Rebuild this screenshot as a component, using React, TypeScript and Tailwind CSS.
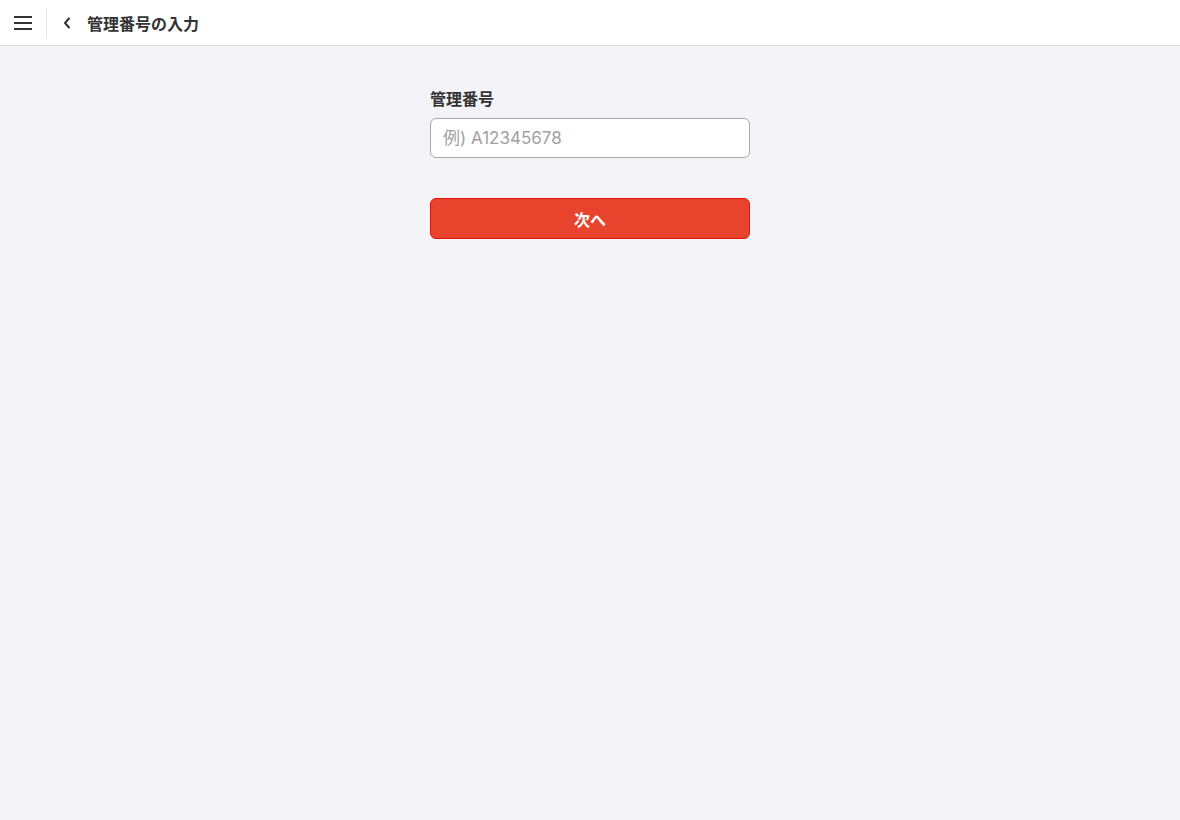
export default function App() {
  return (
    <div
      className="min-h-[820px] bg-[#f3f3f8] text-[#333]"
      style={{ fontFamily: '"Noto Sans CJK JP", "Noto Sans", sans-serif' }}
    >
      <header className="h-[46px] bg-white border-b border-[#dcdce0] flex items-center">
        <button className="w-[46px] h-full flex items-center justify-center">
          <svg width="18" height="14" viewBox="0 0 18 14" fill="none" stroke="#333" strokeWidth="2">
            <path d="M0 1h18M0 7h18M0 13h18" />
          </svg>
        </button>
        <div className="w-px h-[30px] bg-[#e2e2e6]" />
        <button className="w-[40px] h-full flex items-center justify-center">
          <svg width="8" height="12" viewBox="0 0 8 12" fill="none" stroke="#333" strokeWidth="2" strokeLinecap="round" strokeLinejoin="round">
            <path d="M6 1.5L2 6l4 4.5" />
          </svg>
        </button>
        <h1 className="text-[16px] font-bold leading-none">管理番号の入力</h1>
      </header>

      <main className="flex justify-center pt-[41px]">
        <div className="w-[320px] flex flex-col">
          <label className="text-[16px] font-bold leading-[22px] mb-[9px]">管理番号</label>
          <input
            type="text"
            placeholder="例) A12345678"
            className="h-[40px] rounded-[6px] border border-[#a8a8ac] bg-white px-3 text-[17px] placeholder:text-[#a0a0a4] outline-none"
            style={{ fontFamily: 'Inter, "Noto Sans CJK JP", sans-serif' }}
          />
          <button className="mt-[40px] h-[41px] rounded-[6px] bg-[#e8432c] border border-[#e0140a] text-white text-[16px] font-bold">
            次へ
          </button>
        </div>
      </main>
    </div>
  );
}
